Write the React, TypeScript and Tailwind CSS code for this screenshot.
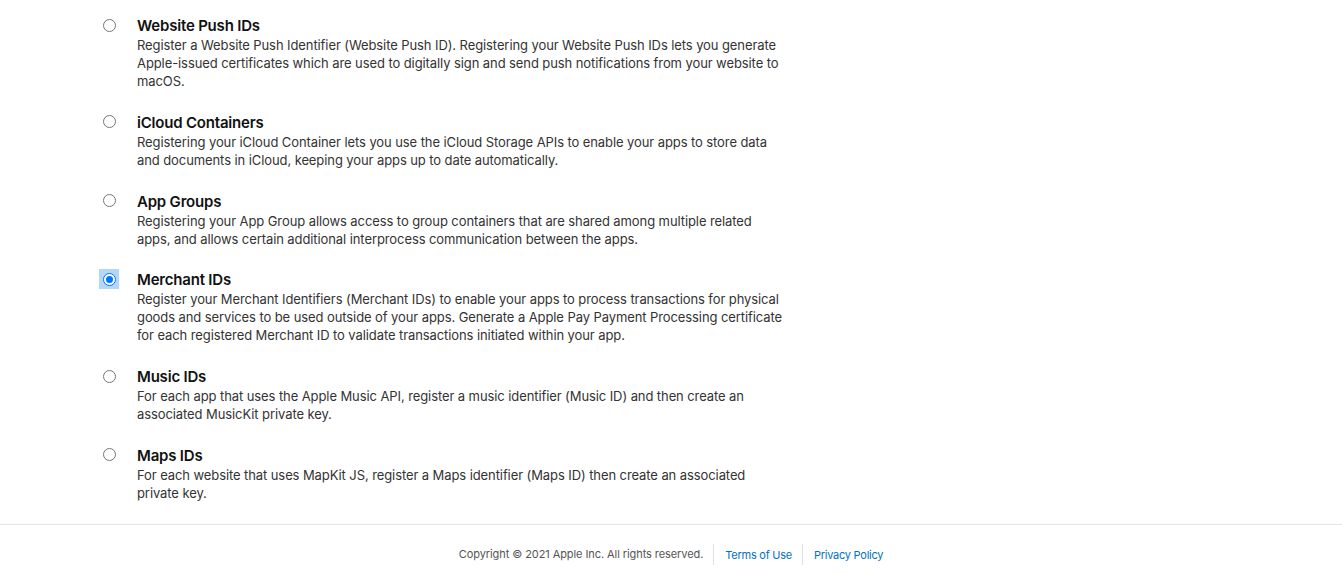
import React from "react";

interface IdType {
  title: string;
  description: string;
  selected?: boolean;
}

const idTypes: IdType[] = [
  {
    title: "Website Push IDs",
    description:
      "Register a Website Push Identifier (Website Push ID). Registering your Website Push IDs lets you generate Apple-issued certificates which are used to digitally sign and send push notifications from your website to macOS.",
  },
  {
    title: "iCloud Containers",
    description:
      "Registering your iCloud Container lets you use the iCloud Storage APIs to enable your apps to store data and documents in iCloud, keeping your apps up to date automatically.",
  },
  {
    title: "App Groups",
    description:
      "Registering your App Group allows access to group containers that are shared among multiple related apps, and allows certain additional interprocess communication between the apps.",
  },
  {
    title: "Merchant IDs",
    description:
      "Register your Merchant Identifiers (Merchant IDs) to enable your apps to process transactions for physical goods and services to be used outside of your apps. Generate a Apple Pay Payment Processing certificate for each registered Merchant ID to validate transactions initiated within your app.",
    selected: true,
  },
  {
    title: "Music IDs",
    description:
      "For each app that uses the Apple Music API, register a music identifier (Music ID) and then create an associated MusicKit private key.",
  },
  {
    title: "Maps IDs",
    description:
      "For each website that uses MapKit JS, register a Maps identifier (Maps ID) then create an associated private key.",
  },
];

function Radio({ checked }: { checked?: boolean }) {
  if (checked) {
    return (
      <div className="w-[20px] h-[20px] bg-[#b3d7f7] flex items-center justify-center">
        <div className="w-[13px] h-[13px] rounded-full bg-white border border-[#0075ff] flex items-center justify-center">
          <div className="w-[7px] h-[7px] rounded-full bg-[#0075ff]" />
        </div>
      </div>
    );
  }
  return (
    <div className="w-[20px] h-[20px] flex items-center justify-center">
      <div className="w-[13px] h-[13px] rounded-full bg-white border border-[#767676]" />
    </div>
  );
}

export default function App() {
  return (
    <div className="min-h-[574px] bg-white font-['Inter','Liberation_Sans',sans-serif] text-[#1d1d1f]">
      <div className="pl-[99px] pt-[15px]">
        {idTypes.map((item) => (
          <label key={item.title} className="flex items-start mb-[21.8px] last:mb-0">
            <div className="w-[38px]">
              <Radio checked={item.selected} />
            </div>
            <div className="w-[648px]">
              <div className="text-[15px] leading-[21px] font-semibold tracking-[-0.2px] text-[#111]">
                {item.title}
              </div>
              <p className="text-[13px] leading-[18px] tracking-[-0.09px] text-[#333]">
                {item.description}
              </p>
            </div>
          </label>
        ))}
      </div>

      <footer className="mt-[22px] border-t border-[#e5e5e5] h-[49px] flex items-start justify-center pt-[19px] text-[11px]">
        <span className="text-[#555] pr-[10px] leading-[20px] tracking-[-0.08px]">
          Copyright © 2021 Apple Inc. All rights reserved.
        </span>
        <a className="text-[#0070c9] pl-[11px] pr-[10px] border-l border-[#e0e0e0] leading-[20px] pt-[1px] tracking-[-0.25px]" href="#">
          Terms of Use
        </a>
        <a className="text-[#0070c9] pl-[11px] border-l border-[#e0e0e0] leading-[20px] pt-[1px] tracking-[-0.25px]" href="#">
          Privacy Policy
        </a>
      </footer>
    </div>
  );
}
